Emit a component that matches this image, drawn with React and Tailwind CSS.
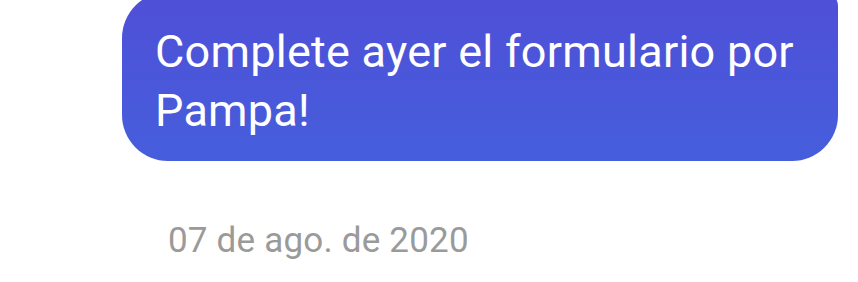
export default function App() {
  return (
    <div className="w-[858px] h-[282px] bg-white overflow-hidden font-['Roboto',sans-serif]">
      <div className="flex flex-col items-start pl-[122px]">
        {/* Bubble */}
        <div className="-mt-[8px] w-[716px] h-[169px] pl-[33px] pr-[20px] pt-[30px] rounded-[46px] rounded-tr-[14px] bg-gradient-to-b from-[#4f4fd7] to-[#455edc] text-white text-[45px] leading-[59px] tracking-[0.25px]">
          Complete ayer el formulario por Pampa!
        </div>

        {/* Date */}
        <div className="mt-[60px] pl-[46px] text-[35px] leading-[40px] tracking-[0.2px] text-[#9a9a9a]">
          07 de ago. de 2020
        </div>
      </div>
    </div>
  );
}
